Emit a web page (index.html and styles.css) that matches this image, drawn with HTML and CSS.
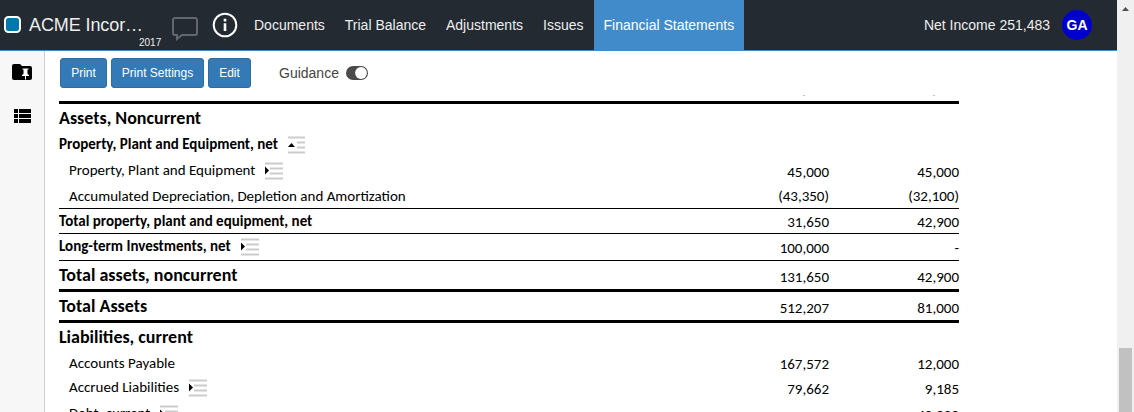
FILE: index.html
```
<!DOCTYPE html>
<html lang="en">
<head>
<meta charset="utf-8">
<title>Financial Statements</title>
<link rel="stylesheet" href="styles.css">
</head>
<body>
<svg width="0" height="0" class="defs">
  <symbol id="closed" viewBox="0 0 18 18"><path d="M0 1.5h18M5 6.5h13M5 11.5h13M0 16.500h18" stroke="#ccc" stroke-width="1.800"/><path d="M0 4.500l4 4L0 12.500z"/></symbol>
  <symbol id="open" viewBox="0 0 18 18"><path d="M0 1.5h17M9 6.500h8M9 11.500h8M0 16.500h17" stroke="#ccc" stroke-width="1.800"/><path d="M0 11l3.500-4L7 11z"/></symbol>
</svg>
<div class="app">
  <div class="page">
    <header class="topbar">
      <svg class="logo" width="18" height="18" viewBox="0 0 18 18"><rect x="1" y="1" width="15" height="15" rx="3.500" fill="#0078ae" stroke="#fff" stroke-width="2"/></svg>
      <div class="client"><span class="name">ACME Incor…</span><span class="year">2017</span></div>
      <svg class="chat" width="26" height="24" viewBox="0 0 26 24"><path d="M3 1h20q2 0 2 2v13q0 2-2 2H10l-5 4v-4H3q-2 0-2-2V3q0-2 2-2z" fill="none" stroke="#63676b" stroke-width="2"/></svg>
      <svg class="info" width="26" height="26" viewBox="0 0 26 26"><circle cx="13" cy="13" r="11.3" fill="none" stroke="#fff" stroke-width="2"/><path d="M11.7 6.8h2.6v2.7h-2.6zM11.7 11.3h2.6v7.8h-2.6z" fill="#fff"/></svg>
      <nav class="nav"><a>Documents</a><a>Trial Balance</a><a>Adjustments</a><a>Issues</a><a class="active">Financial Statements</a></nav>
      <div class="income">Net Income 251,483</div>
      <div class="avatar">GA</div>
    </header>
    <div class="body">
      <aside class="side">
        <svg width="20" height="17" viewBox="0 0 20 17"><path d="M2 0h6l2 2h8q2 0 2 2v10q0 2-2 2H2q-2 0-2-2V2q0-2 2-2z"/><path d="M10.500 4.500h6v1h-1v4.500l1.500 1v1h-3v3l-.5 1-.5-1v-3h-3v-1l1.500-1V5.500h-1z" fill="#fff"/></svg>
        <svg width="17" height="14" viewBox="0 0 17 14"><path d="M0 0h4v4H0zM5 0h12v4H5zM0 5h4v4H0zM5 5h12v4H5zM0 10h4v4H0zM5 10h12v4H5z"/></svg>
      </aside>
      <main class="main">
        <div class="tools">
          <button class="btn print">Print</button><button class="btn settings">Print Settings</button><button class="btn edit">Edit</button>
          <span class="guidance">Guidance</span>
          <svg width="22" height="14" viewBox="0 0 22 14"><rect width="22" height="14" rx="7" fill="#4b4b4b"/><circle cx="15" cy="7" r="5.900" fill="#fff"/></svg>
        </div>
        <div class="cut"><i></i><i></i></div>
        <div class="sheet">
          <div class="row h1 first"><b>Assets, Noncurrent</b></div>
          <div class="row h2"><b>Property, Plant and Equipment, net</b><svg class="ic"><use href="#open"/></svg></div>
          <div class="row item"><span>Property, Plant and Equipment</span><svg class="ic"><use href="#closed"/></svg><em>45,000</em><em>45,000</em></div>
          <div class="row item last"><span>Accumulated Depreciation, Depletion and Amortization</span><em>(43,350)</em><em>(32,100)</em></div>
          <div class="row h2 sum"><b>Total property, plant and equipment, net</b><em>31,650</em><em>42,900</em></div>
          <div class="row h2 lti"><b>Long-term Investments, net</b><svg class="ic"><use href="#closed"/></svg><em>100,000</em><em>-</em></div>
          <div class="row h1 thick"><b>Total assets, noncurrent</b><em>131,650</em><em>42,900</em></div>
          <div class="row h1 thick"><b>Total Assets</b><em>512,207</em><em>81,000</em></div>
          <div class="row h1"><b>Liabilities, current</b></div>
          <div class="row item short"><span>Accounts Payable</span><em>167,572</em><em>12,000</em></div>
          <div class="row item accrued"><span>Accrued Liabilities</span><svg class="ic"><use href="#closed"/></svg><em>79,662</em><em>9,185</em></div>
          <div class="row item"><span>Debt, current</span><svg class="ic"><use href="#closed"/></svg><em></em><em>40,000</em></div>
        </div>
      </main>
    </div>
  </div>
  <div class="scroll"><svg width="7" height="4" viewBox="0 0 7 4"><path d="M0 4l3.500-4L7 4z" fill="#505050"/></svg><div class="thumb"></div></div>
</div>
</body>
</html>
```
FILE: styles.css
```
* { box-sizing: border-box; }
body { margin: 0; background: #fff; font-family: "Liberation Sans", Arial, sans-serif; overflow: hidden; }
svg { display: block; flex: none; }
.defs { display: none; }
.app { display: flex; height: 412px; overflow: hidden; }
.page { width: 1117px; display: flex; flex-direction: column; }
.topbar { height: 51px; flex: none; display: flex; align-items: center; background: #232a31; border-bottom: 1px solid #428bca; color: #eee; padding-left: 4px; }
.client { width: 139px; margin-left: 7px; height: 50px; display: flex; flex-direction: column; padding-top: 15px; }
.name { font-size: 18px; line-height: 20px; white-space: nowrap; letter-spacing: -.1px; }
.year { font-size: 10px; line-height: 12px; padding-left: 110px; padding-top: 2px; }
.chat { margin: 8px 0 0 4px; }
.info { margin-left: 14px; }
.nav { display: flex; height: 50px; margin-left: 6px; font-size: 14px; line-height: 50px; }
.nav a { padding: 0 10px; height: 51px; white-space: nowrap; }
.nav .active { background: #428bca; color: #fff; }
.income { margin-left: auto; font-size: 14px; }
.avatar { width: 30px; height: 30px; border-radius: 50%; background: #0000cd; color: #fff; font-weight: bold; font-size: 14px; line-height: 30px; text-align: center; margin: 0 25px 0 12px; }
.body { display: flex; flex: 1; min-height: 0; }
.side { width: 45px; background: #f7f7f7; border-right: 1px solid #ccc; padding: 13px 0 0 12px; display: flex; flex-direction: column; gap: 28px; }
.side svg + svg { margin-left: 2px; }
.main { flex: 1; overflow: hidden; padding: 7px 0 0 14px; }
.tools { height: 30px; display: flex; align-items: center; padding-left: 1px; }
.btn { height: 30px; background: #337ab7; border: 1px solid #2e6da4; border-radius: 3px; color: #fff; font: 12px "Liberation Sans", Arial, sans-serif; padding: 0; margin-right: 4px; }
.print { width: 47px; }
.settings { width: 93px; }
.edit { width: 43px; }
.guidance { font-size: 14px; color: #444; margin: 0 7px 0 24px; }
.cut { height: 13px; width: 900px; padding: 7px 0 0 744px; display: flex; gap: 128px; }
.cut i { width: 2px; height: 1px; background: #b4c4c8; }
.sheet { width: 900px; border-top: 3px solid #000; color: #000; font-family: Carlito, Lato, sans-serif; }
.row { height: 26px; display: flex; align-items: center; white-space: nowrap; }
.row em { font-size: 15px; font-style: normal; width: 130px; text-align: right; padding-top: 3px; }
.row em:nth-last-child(2) { margin-left: auto; }
.ic { width: 18px; height: 18px; margin: 2px 0 0 10px; }
.h1 { height: 28px; font-size: 18px; }
.h1.first, .h1:nth-child(9) { height: 27px; }
.h2 { font-size: 15px; }
.item { font-size: 15px; padding-left: 10px; }
.last { border-bottom: 1px solid #000; }
.sum { height: 25px; border-bottom: 1px solid #000; }
.last em, .sum em { padding-top: 1px; }
.lti { height: 27px; border-bottom: 1px solid #000; padding-bottom: 2px; }
.h1.thick { height: 31px; border-bottom: 3px solid #000; }
.short { height: 25px; }
.accrued { height: 25px; padding-bottom: 2px; }
.accrued em { padding-top: 5px; }
.scroll { width: 17px; background: #f0f0f0; padding: 7px 2px 0; }
.scroll svg { margin-left: 3px; }
.thumb { margin-top: 337px; height: 64px; background: #c1c1c1; }
```
